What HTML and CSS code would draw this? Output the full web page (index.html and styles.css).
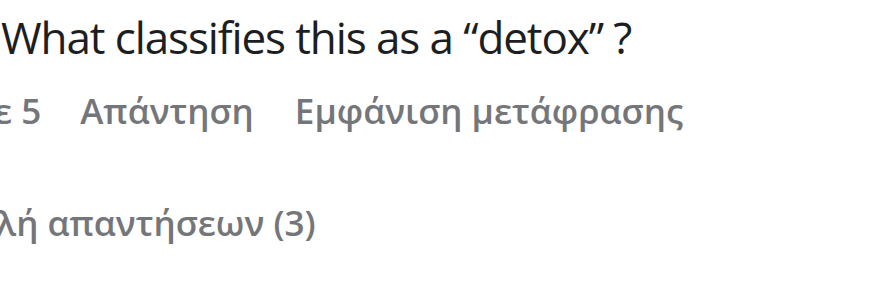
FILE: index.html
```html
<!DOCTYPE html>
<html lang="el">
<head>
<meta charset="utf-8">
<link rel="stylesheet" href="styles.css">
</head>
<body>
<div class="comment">
  <div class="title">What classifies this as a “detox” ?</div>
  <div class="actions">
    <span class="cut">ε 5</span>
    <span class="action">Απάντηση</span>
    <span class="action action-last">Εμφάνιση μετάφρασης</span>
  </div>
  <div class="replies"><span class="cut2">λή απαντήσεων (3)</span></div>
</div>
</body>
</html>
```
FILE: styles.css
```css
html, body {
  margin: 0;
  background: #ffffff;
}
.comment {
  font-family: "Open Sans", "Noto Sans", sans-serif;
  padding: 9px 0 0 0;
  overflow: hidden;
  width: 880px;
  height: 274px;
}
.title {
  font-size: 44px;
  line-height: 56px;
  letter-spacing: -1.1px;
  color: #1c1e21;
  margin-left: 1px;
  white-space: nowrap;
}
.actions {
  display: flex;
  gap: 39px;
  font-size: 35px;
  font-weight: 600;
  color: #74767a;
  line-height: 48px;
  margin-top: 22px;
  white-space: nowrap;
}
.action-last {
  margin-left: 2px;
}
.cut {
  margin-left: -6px;
}
.replies {
  font-size: 35px;
  font-weight: 600;
  color: #74767a;
  line-height: 48px;
  margin-top: 64px;
  white-space: nowrap;
}
.cut2 {
  margin-left: -4px;
}
```
